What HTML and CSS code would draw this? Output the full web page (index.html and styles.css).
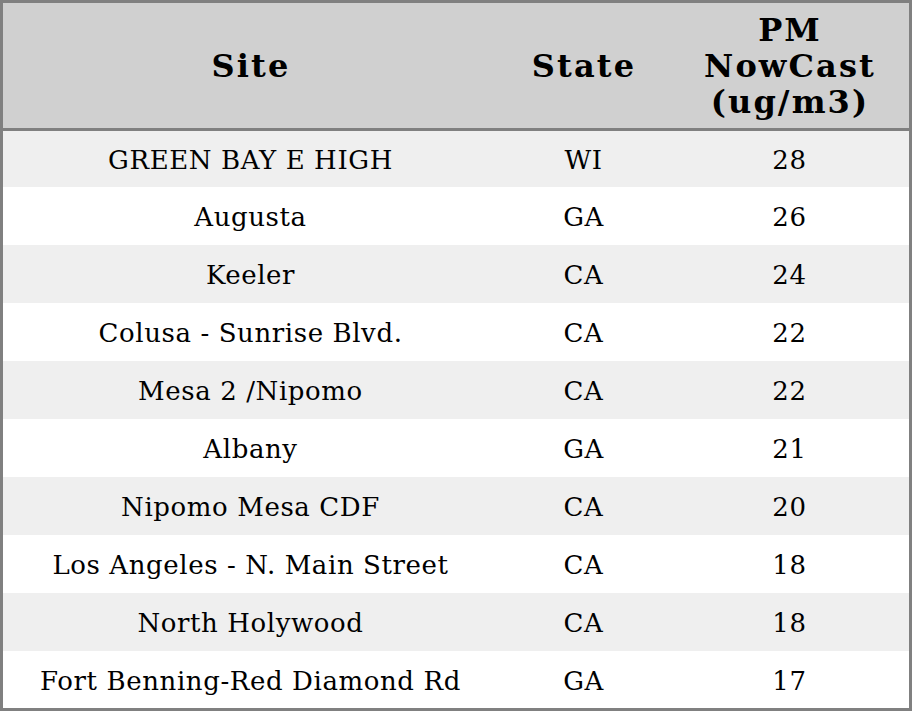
FILE: index.html
```html
<!DOCTYPE html>
<html>
<head>
<meta charset="utf-8">
<link rel="stylesheet" href="styles.css">
</head>
<body>
<table class="aq">
  <colgroup>
    <col class="c-site">
    <col class="c-state">
    <col class="c-pm">
  </colgroup>
  <thead>
    <tr>
      <th>Site</th>
      <th>State</th>
      <th>PM<br>NowCast<br>(ug/m3)</th>
    </tr>
  </thead>
  <tbody>
    <tr><td>GREEN BAY E HIGH</td><td>WI</td><td>28</td></tr>
    <tr><td>Augusta</td><td>GA</td><td>26</td></tr>
    <tr><td>Keeler</td><td>CA</td><td>24</td></tr>
    <tr><td>Colusa - Sunrise Blvd.</td><td>CA</td><td>22</td></tr>
    <tr><td>Mesa 2 /Nipomo</td><td>CA</td><td>22</td></tr>
    <tr><td>Albany</td><td>GA</td><td>21</td></tr>
    <tr><td>Nipomo Mesa CDF</td><td>CA</td><td>20</td></tr>
    <tr><td>Los Angeles - N. Main Street</td><td>CA</td><td>18</td></tr>
    <tr><td>North Holywood</td><td>CA</td><td>18</td></tr>
    <tr><td>Fort Benning-Red Diamond Rd</td><td>GA</td><td>17</td></tr>
  </tbody>
</table>
</body>
</html>
```
FILE: styles.css
```css
html, body {
  margin: 0;
  padding: 0;
  background: #ffffff;
}

.aq {
  width: 912px;
  border: 3px solid #808080;
  border-collapse: separate;
  border-spacing: 0;
  table-layout: fixed;
  font-family: "DejaVu Serif", serif;
  color: #000;
}

.c-site { width: 494px; }
.c-state { width: 172px; }
.c-pm { width: 240px; }

.aq th {
  background: #d0d0d0;
  font-size: 32px;
  line-height: 36px;
  letter-spacing: 2.1px;
  font-weight: bold;
  height: 125px;
  padding: 0 0 0 2px;
  text-align: center;
  vertical-align: middle;
  border-bottom: 3px solid #808080;
}

.aq td {
  font-size: 26px;
  letter-spacing: 0.6px;
  height: 58px;
  padding: 2px 0 0 1px;
  box-sizing: border-box;
  text-align: center;
  vertical-align: middle;
  white-space: nowrap;
}

.aq tbody tr:nth-child(odd) td {
  background: #efefef;
}

.aq tbody tr:first-child td {
  height: 56px;
}

.aq tbody tr:last-child td {
  height: 57px;
}
```
